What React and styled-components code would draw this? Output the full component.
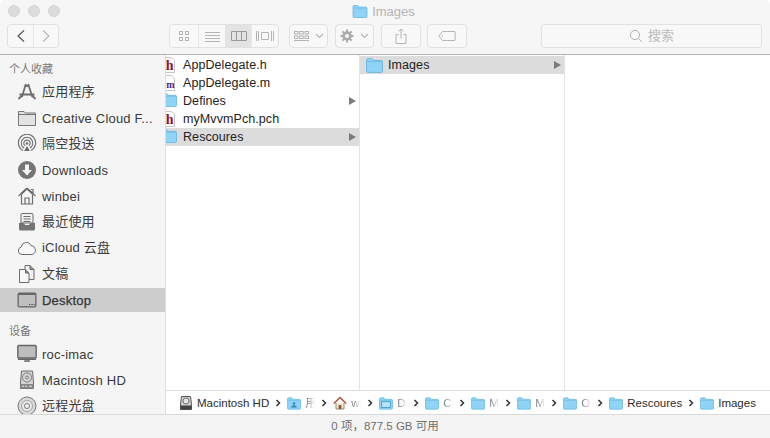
import React from "react";
import styled, { createGlobalStyle } from "styled-components";

const Global = createGlobalStyle`
  html, body { margin: 0; padding: 0; background: #fff; overflow: hidden; }
  * { box-sizing: border-box; }
`;
const FONT = `"Liberation Sans", "Noto Sans CJK SC", sans-serif`;

const Win = styled.div`
  width: 770px; height: 438px; display: flex; flex-direction: column;
  border-radius: 5px 5px 0 0; overflow: hidden; font-family: ${FONT}; background: #fff;
`;
const Toolbar = styled.header`
  height: 55px; flex: none; background: #f6f6f6; border-bottom: 1px solid #b2b2b2;
  display: flex; flex-direction: column;
`;
const TitleRow = styled.div`
  height: 24px; flex: none; position: relative; display: flex; align-items: center; justify-content: center;
  color: #b4b4b4; font-size: 13px; line-height: 16px; gap: 4px; padding-right: 3px; padding-bottom: 1px;
`;
const Lights = styled.div`
  position: absolute; left: 8px; top: 5px; display: flex; gap: 8px;
`;
const Light = styled.span`
  width: 12px; height: 12px; border-radius: 50%; background: #dcdcdc; border: 1px solid #d2d2d2;
`;
const Controls = styled.div`
  height: 24px; display: flex; padding-left: 7px; padding-right: 8px;
`;
const Btn = styled.div`
  width: ${p => p.$w}px; height: 24px; margin-left: ${p => p.$ml || 0}px; flex: none;
  display: flex; align-items: center; justify-content: center; gap: 3px;
  background: #f8f8f8; border: 1px solid #e1e1e1; border-radius: 4px;
`;
const Group = styled.div`
  display: flex; height: 24px; margin-left: ${p => p.$ml}px; border: 1px solid #e1e1e1; border-radius: 4px;
  overflow: hidden; background: #f8f8f8;
`;
const Seg = styled.div`
  width: ${p => p.$w}px; display: flex; align-items: center; justify-content: center;
  background: ${p => (p.$on ? "#e3e3e3" : "transparent")};
  & + & { border-left: 1px solid #e6e6e6; }
`;
const Search = styled(Btn)`
  margin-left: auto; width: 221px; gap: 5px; color: #bcbcbc; font-size: 13px; line-height: 16px;
`;
const Body = styled.div`
  flex: 1; min-height: 0; display: flex;
`;
const Sidebar = styled.aside`
  width: 166px; flex: none; background: #f5f5f5; border-right: 1px solid #dedede; overflow: hidden; padding-top: 7px;
`;
const Heading = styled.div`
  height: 14px; line-height: 14px; padding-left: 9px; font-size: 11px; color: #777;
  margin-bottom: ${p => p.$mb}px; margin-top: ${p => p.$mt || 0}px;
`;
const Item = styled.div`
  height: 24px; margin-bottom: 2px; display: flex; align-items: center; padding-left: 17px; gap: 5px;
  font-size: 13px; line-height: 16px; letter-spacing: .2px; color: #3a3a3a; white-space: nowrap;
  background: ${p => (p.$on ? "#cdcdcd" : "transparent")};
  -webkit-text-stroke: ${p => (p.$on ? "0.25px #2a2a2a" : "0")};
`;
const ItemText = styled.span`
  margin-top: ${p => (p.$latin ? 2 : 0)}px;
`;
const ItemIcon = styled.span`
  width: 20px; height: 20px; flex: none; display: flex;
`;
const Main = styled.main`
  flex: 1; min-width: 0; display: flex; flex-direction: column;
`;
const Cols = styled.div`
  flex: 1; min-height: 0; display: flex;
`;
const Col = styled.section`
  width: ${p => p.$w}px; flex: ${p => (p.$grow ? 1 : "none")}; padding-top: 1px;
  border-right: ${p => (p.$grow ? "none" : "1px solid #e2e2e2")};
`;
const Row = styled.div`
  height: 18px; display: flex; align-items: center; font-size: 12.5px; line-height: 16px; letter-spacing: .08px; color: #222;
  padding-left: ${p => p.$pl}px; padding-right: 2px;
  background: ${p => (p.$on ? "#dcdcdc" : "transparent")};
`;
const Clip = styled.span`
  width: 11px; height: 16px; flex: none; overflow: hidden; margin-right: 6px;
  display: flex; justify-content: flex-end;
  & > svg { flex: none; }
`;
const RowName = styled.span`
  flex: 1; white-space: nowrap; margin-left: ${p => p.$ml || 0}px;
`;
const Arrow = styled.span`
  width: 0; height: 0; margin-right: 1px; border-left: 7px solid #7b7b7b;
  border-top: 4px solid transparent; border-bottom: 4px solid transparent;
`;
const PathBar = styled.nav`
  height: 24px; flex: none; border-top: 1px solid #dcdcdc; display: flex; align-items: center;
  padding-left: 13px; padding-top: 1px; font-size: 11.5px; line-height: 14px; color: #2c2c2c; white-space: nowrap; background: #fff;
`;
const Crumb = styled.span`
  display: flex; align-items: center; gap: 4px;
`;
const Label = styled.span`
  display: block;
  ${p => p.$fade && `
    width: 10px; overflow: hidden; color: #8a8a8a;
    -webkit-mask-image: linear-gradient(90deg, #000 30%, transparent);
    mask-image: linear-gradient(90deg, #000 30%, transparent);
  `}
`;
const Sep = styled.svg`
  width: 6px; height: 8px; margin: 0 6px; flex: none;
`;
const Status = styled.footer`
  height: 24px; flex: none; background: #f4f4f4; border-top: 1px solid #d8d8d8; padding-bottom: 1px;
  display: flex; align-items: center; justify-content: center; font-size: 11.5px; line-height: 14px; color: #6e6e6e;
`;

const Folder = ({ w = 16, h = 14, inner }) => (
  <svg width={w} height={h} viewBox="0 0 16 14" style={{ flex: "none" }}>
    <path d="M.5 2.5V1.6C.5 1 1 .5 1.6.5h3.6c.5 0 .7.2 1 .6l.9 1.2h7.3c.6 0 1.1.5 1.1 1.1v9c0 .6-.5 1.1-1.1 1.1H1.6C1 13.5.5 13 .5 12.4z" fill="#8fd3f7" stroke="#5fb4e3" strokeWidth=".8" />
    <path d="M.8 3.3h14.4" stroke="#6bbde9" strokeWidth=".8" />
    {inner === "user" && <path d="M8 5.5a1.5 1.5 0 1 1 0 3 1.5 1.5 0 0 1 0-3zM4.8 11.5c0-1.7 1.4-2.6 3.2-2.6s3.2.9 3.2 2.6z" fill="#2f86bd" />}
    {inner === "desk" && <rect x="3" y="5" width="10" height="6.5" fill="#b9e5fb" stroke="#3f9ad0" />}
  </svg>
);
const GreyFolder = () => (
  <svg width="20" height="20" viewBox="0 0 20 20">
    <path d="M1.5 5V3.5h5.5L8.3 5H18.5v12.5h-17z" fill="#e3e3e3" stroke="#777" />
    <path d="M1.5 6.5h17" stroke="#777" />
  </svg>
);
const S = { fill: "none", stroke: "#6d6d6d" };
const side = {
  apps: <svg width="20" height="20" viewBox="0 0 20 20"><path d="M8.8 2 5 15M11.2 2 15.4 15M2.5 12.5h15M1.5 17l3-3M18.5 17l-3-3M9 4h2" {...S} strokeWidth="1.8" /></svg>,
  folder: <GreyFolder />,
  air: <svg width="20" height="20" viewBox="0 0 20 20"><g {...S} strokeWidth="1.1"><path d="M6 16.5A8.6 8.6 0 1 1 14 16.5" /><path d="M7 14a5.8 5.8 0 1 1 6 0" /><path d="M8 11.8a3.2 3.2 0 1 1 4 0" /></g><circle cx="10" cy="9.5" r="1.3" fill="#6d6d6d" /><path d="M10 12l3 5H7z" fill="#6d6d6d" /></svg>,
  down: <svg width="20" height="20" viewBox="0 0 20 20"><circle cx="10" cy="10" r="9" fill="#757575" /><path d="M8 4.5h4V10h3l-5 5.5L5 10h3z" fill="#f5f5f5" /></svg>,
  home: <svg width="20" height="20" viewBox="0 0 20 20"><path d="M1.5 10 10 2.5 18.5 10M4.5 8.5V18h11V8.5M8 18v-6h4v6M14 3.5h2V7" {...S} strokeWidth="1.2" /><path d="M10 2.5 4 8M10 2.5 16 8" {...S} strokeWidth="2" /></svg>,
  recent: <svg width="20" height="20" viewBox="0 0 20 20"><path d="M5 1.5h10a1 1 0 0 1 1 1V11H4V2.5a1 1 0 0 1 1-1z" fill="#f2f2f2" stroke="#6d6d6d" /><path d="M6.5 4.5h7M6.5 7h7M6.5 9.5h7" {...S} /><path d="M2 11h5l1 2h4l1-2h5v6a1.5 1.5 0 0 1-1.5 1.5h-13A1.5 1.5 0 0 1 2 17z" fill="#757575" /></svg>,
  cloud: <svg width="20" height="20" viewBox="0 0 20 20"><path d="M5 16.5a3.8 3.8 0 0 1-.7-7.5 5 5 0 0 1 9.6-1.5 4.6 4.6 0 0 1 1.2 9z" {...S} fill="#f8f8f8" strokeWidth="1" /></svg>,
  docs: <svg width="20" height="20" viewBox="0 0 20 20"><path d="M8 1.5h5l4 4v10H8z" fill="#f0f0f0" stroke="#6d6d6d" /><path d="M13 1.5v4h4" fill="#8a8a8a" stroke="#6d6d6d" /><path d="M2.5 5.5h6l3.5 3.5v9.5H2.5z" fill="#f8f8f8" stroke="#6d6d6d" /><path d="M8.5 5.5V9H12" fill="#8a8a8a" stroke="#6d6d6d" /></svg>,
  desktop: <svg width="20" height="20" viewBox="0 0 20 20"><rect x=".5" y="2.5" width="19" height="15" rx="2" fill="#666" /><rect x="1.8" y="5" width="16.4" height="11.2" fill="#bfbfbf" /><path d="M12 14.5h1.2M14.4 14.5h1.2M16.6 14.5h1" stroke="#444" /></svg>,
  imac: <svg width="20" height="20" viewBox="0 0 20 20"><rect x=".8" y="1.5" width="18.4" height="12.5" rx="1" fill="#bdbdbd" stroke="#666" strokeWidth="1.4" /><path d="M1 14.5h18v1.5H1z" fill="#666" /><path d="M7.5 16h5l.8 2h-6.6z" fill="#888" /></svg>,
  hd: <svg width="20" height="20" viewBox="0 0 20 20"><path d="M4.5 1h11l1 11v6.5h-13V12z" fill="#d4d4d4" stroke="#6d6d6d" /><circle cx="10" cy="7.5" r="4.6" {...S} strokeWidth=".8" /><circle cx="10" cy="7.5" r="1.5" {...S} strokeWidth=".8" /><rect x="3.5" y="14" width="13" height="4.5" fill="#888" /><path d="M5 16.3h2M8 16.3h2M12 16.3h3" stroke="#e2e2e2" /></svg>,
  disc: <svg width="20" height="20" viewBox="0 0 20 20"><circle cx="10" cy="10" r="9" fill="#d9d9d9" stroke="#777" /><circle cx="10" cy="10" r="5.5" fill="#e9e9e9" stroke="#a5a5a5" /><circle cx="10" cy="10" r="2.5" fill="#f5f5f5" stroke="#777" /></svg>,
};

const SourceFile = ({ letter, color, size, x }) => (
  <svg width="16" height="16" viewBox="0 0 16 16">
    <path d="M2.5 .5h8l3 3v12h-11z" fill="#fff" stroke="#c6c6c6" />
    <text x={x} y="13" textAnchor="middle" fontFamily={`"Liberation Serif", serif`} fontWeight="700" fontSize={size} fill={color}>{letter}</text>
  </svg>
);
const Hfile = () => <SourceFile letter="h" color="#8c1230" size={14} x={8.8} />;
const Mfile = () => <SourceFile letter="m" color="#4b2a8c" size={10} x={9.4} />;
const ClippedFolder = () => <Folder w={16} h={14} />;

const T = { fill: "none", stroke: "#b4b4b4" };
const sidebar = [
  ["apps", "应用程序"], ["folder", "Creative Cloud F..."], ["air", "隔空投送"], ["down", "Downloads"],
  ["home", "winbei"], ["recent", "最近使用"], ["cloud", "iCloud 云盘"], ["docs", "文稿"],
];
const devices = [["imac", "roc-imac"], ["hd", "Macintosh HD"], ["disc", "远程光盘"]];
const isLatin = t => /^[\x00-\x7f]+$/.test(t);
const files = [
  [Hfile, "AppDelegate.h"], [Mfile, "AppDelegate.m"], [ClippedFolder, "Defines", true],
  [Hfile, "myMvvmPch.pch"], [ClippedFolder, "Rescoures", true, true],
];
const Chevron = () => (
  <Sep viewBox="0 0 6 8"><path d="M1.5 1 4.5 4 1.5 7" fill="none" stroke="#333" strokeWidth="1.5" /></Sep>
);
const crumbs = [
  ["hd", "Macintosh HD"], ["user", "用", 1], ["home", "winbei", 1], ["desk", "Desktop", 1], ["", "Cr", 1],
  ["", "My", 1], ["", "My", 1], ["", "Ot", 1], ["", "Rescoures"], ["", "Images"],
];
const CrumbIcon = ({ k }) => {
  if (k === "hd") return <svg width="14" height="14" viewBox="0 0 14 14"><path d="M2.5 .5h9l1 8v5h-11v-5z" fill="#cfcfcf" stroke="#555" /><circle cx="7" cy="5" r="3" fill="#e4e4e4" stroke="#777" /><rect x="1.5" y="9.5" width="11" height="4" fill="#444" /></svg>;
  if (k === "home") return <svg width="14" height="14" viewBox="0 0 14 14"><path d="M3 7v6h8V7" fill="#f3e7d2" stroke="#9a8a70" /><path d="M.8 7.5 7 1.5l6.2 6" fill="none" stroke="#b5553a" strokeWidth="1.6" /><rect x="5.6" y="9" width="2.8" height="4" fill="#7a5a3a" /></svg>;
  return <Folder w={14} h={13} inner={k} />;
};

export default function App() {
  return (
    <Win>
      <Global />
      <Toolbar>
        <TitleRow>
          <Lights><Light /><Light /><Light /></Lights>
          <Folder w={16} h={13} />
          <span>Images</span>
        </TitleRow>
        <Controls>
          <Group $ml={0}>
            <Seg $w={25}><svg width="10" height="14" viewBox="0 0 10 14"><path d="M8 1.5 2 7l6 5.5" fill="none" stroke="#555" strokeWidth="1.2" /></svg></Seg>
            <Seg $w={25}><svg width="10" height="14" viewBox="0 0 10 14"><path d="M2 1.5 8 7l-6 5.5" {...T} strokeWidth="1.1" /></svg></Seg>
          </Group>
          <Group $ml={110}>
            <Seg $w={28}><svg width="12" height="12" viewBox="0 0 12 12"><g {...T}><rect x="1.5" y="1.5" width="3" height="3" /><rect x="7.5" y="1.5" width="3" height="3" /><rect x="1.5" y="7.5" width="3" height="3" /><rect x="7.5" y="7.5" width="3" height="3" /></g></svg></Seg>
            <Seg $w={27}><svg width="15" height="11" viewBox="0 0 15 11"><path d="M0 1.5h15M0 4.5h15M0 7.5h15M0 10.5h15" {...T} /></svg></Seg>
            <Seg $w={26} $on><svg width="16" height="10" viewBox="0 0 16 10"><path d="M.5.5h15v9H.5zM5.5.5v9M10.5.5v9" fill="none" stroke="#999" /></svg></Seg>
            <Seg $w={27}><svg width="18" height="10" viewBox="0 0 18 10"><path d="M5.5 1.5h7v7h-7zM.5 0v10M2.5 0v10M15.5 0v10M17.5 0v10" {...T} /></svg></Seg>
          </Group>
          <Btn $w={39} $ml={10}>
            <svg width="15" height="10" viewBox="0 0 15 10"><g {...T}><rect x=".5" y=".5" width="3.5" height="2.5" /><rect x="5.7" y=".5" width="3.5" height="2.5" /><rect x="11" y=".5" width="3.5" height="2.5" /><rect x=".5" y="5" width="3.5" height="2.5" /><rect x="5.7" y="5" width="3.5" height="2.5" /><rect x="11" y="5" width="3.5" height="2.5" /></g><path d="M0 9.5h15" {...T} /></svg>
            <svg width="9" height="6" viewBox="0 0 9 6" style={{ marginLeft: 3 }}><path d="M1 1l3.5 3.5L8 1" {...T} strokeWidth="1.1" /></svg>
          </Btn>
          <Btn $w={39} $ml={7}>
            <svg width="14" height="14" viewBox="0 0 14 14"><circle cx="7" cy="7" r="3.4" fill="none" stroke="#aaa" strokeWidth="2.6" /><path d="M7 .5v2.4M7 11.1v2.4M.5 7h2.4M11.1 7h2.4M2.4 2.4l1.7 1.7M9.9 9.9l1.7 1.7M11.6 2.4 9.9 4.1M4.1 9.9l-1.7 1.7" stroke="#aaa" strokeWidth="2" /></svg>
            <svg width="9" height="6" viewBox="0 0 9 6" style={{ marginLeft: 3 }}><path d="M1 1l3.5 3.5L8 1" {...T} strokeWidth="1.1" /></svg>
          </Btn>
          <Btn $w={40} $ml={7}>
            <svg width="12" height="16" viewBox="0 0 12 16"><path d="M3.5 6.5H1v9h10v-9H8.5M6 10.5V1M3.5 3.3 6 1l2.5 2.3" {...T} /></svg>
          </Btn>
          <Btn $w={40} $ml={6}>
            <svg width="18" height="10" viewBox="0 0 18 10"><path d="M4.5.5h11.5a1.2 1.2 0 0 1 1.2 1.2v6.6a1.2 1.2 0 0 1-1.2 1.2H4.5L.8 5z" {...T} /><circle cx="4.2" cy="5" r=".8" fill="#b4b4b4" /></svg>
          </Btn>
          <Search $w={221}>
            <svg width="14" height="14" viewBox="0 0 14 14"><circle cx="6" cy="6" r="4.6" {...T} /><path d="M9.4 9.4 13 13" {...T} /></svg>
            <span>搜索</span>
          </Search>
        </Controls>
      </Toolbar>
      <Body>
        <Sidebar>
          <Heading $mb={4}>个人收藏</Heading>
          {sidebar.map(([k, t]) => (
            <Item key={t}><ItemIcon>{side[k]}</ItemIcon><ItemText $latin={isLatin(t)}>{t}</ItemText></Item>
          ))}
          <Item $on><ItemIcon>{side.desktop}</ItemIcon><ItemText $latin>Desktop</ItemText></Item>
          <Heading $mt={12} $mb={4}>设备</Heading>
          {devices.map(([k, t]) => (
            <Item key={t}><ItemIcon>{side[k]}</ItemIcon><ItemText $latin={isLatin(t)}>{t}</ItemText></Item>
          ))}
        </Sidebar>
        <Main>
          <Cols>
            <Col $w={194}>
              {files.map(([Ic, name, arrow, on]) => (
                <Row key={name} $pl={0} $on={on}>
                  <Clip><Ic /></Clip>
                  <RowName>{name}</RowName>
                  {arrow && <Arrow />}
                </Row>
              ))}
            </Col>
            <Col $w={205}>
              <Row $pl={6} $on>
                <Folder w={17} h={15} />
                <RowName $ml={5}>Images</RowName>
                <Arrow />
              </Row>
            </Col>
            <Col $grow />
          </Cols>
          <PathBar>
            {crumbs.map(([k, t, fade], i) => (
              <React.Fragment key={i}>
                {i > 0 && <Chevron />}
                <Crumb><CrumbIcon k={k} /><Label $fade={!!fade}>{t}</Label></Crumb>
              </React.Fragment>
            ))}
          </PathBar>
        </Main>
      </Body>
      <Status>0 项，877.5 GB 可用</Status>
    </Win>
  );
}
